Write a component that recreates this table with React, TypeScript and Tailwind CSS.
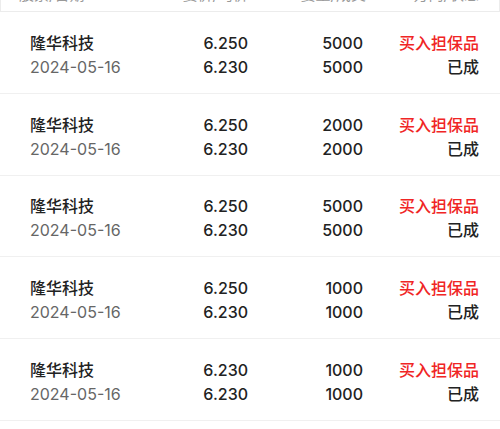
const orders = [
  { name: "隆华科技", date: "2024-05-16", price: "6.250", avg: "6.230", qty: "5000", filled: "5000", side: "买入担保品", status: "已成" },
  { name: "隆华科技", date: "2024-05-16", price: "6.250", avg: "6.230", qty: "2000", filled: "2000", side: "买入担保品", status: "已成" },
  { name: "隆华科技", date: "2024-05-16", price: "6.250", avg: "6.230", qty: "5000", filled: "5000", side: "买入担保品", status: "已成" },
  { name: "隆华科技", date: "2024-05-16", price: "6.250", avg: "6.230", qty: "1000", filled: "1000", side: "买入担保品", status: "已成" },
  { name: "隆华科技", date: "2024-05-16", price: "6.230", avg: "6.230", qty: "1000", filled: "1000", side: "买入担保品", status: "已成" },
];

export default function App() {
  return (
    <div
      className="h-[429px] w-[500px] overflow-hidden bg-white text-[#222]"
      style={{ fontFamily: 'Inter, "Noto Sans CJK SC", sans-serif' }}
    >
      {/* header, scrolled partly out of view */}
      <div className="-mt-[20px] flex h-[32px] items-center border-x border-b border-[#ececec] pl-[18px] pr-[20px] text-[15px] text-[#999]">
        <div className="flex-1">股票/日期</div>
        <div className="w-[120px] text-right">委价/均价</div>
        <div className="w-[118px] text-right">委量/成交</div>
        <div className="w-[113px] text-right">方向/状态</div>
      </div>

      {orders.map((o, i) => (
        <div key={i} className="flex h-[81.8px] items-center border-b border-[#f0f0f0] pl-[30px] pr-[21px] pt-[5px] text-[16px] font-medium leading-[24px]">
          <div className="flex-1">
            <div className="text-[#222]">{o.name}</div>
            <div className="font-normal text-[#666]">{o.date}</div>
          </div>
          <div className="w-[120px] text-right">
            <div>{o.price}</div>
            <div>{o.avg}</div>
          </div>
          <div className="w-[115px] text-right">
            <div>{o.qty}</div>
            <div>{o.filled}</div>
          </div>
          <div className="w-[116px] text-right">
            <div className="text-[#f02525]">{o.side}</div>
            <div>{o.status}</div>
          </div>
        </div>
      ))}
    </div>
  );
}
